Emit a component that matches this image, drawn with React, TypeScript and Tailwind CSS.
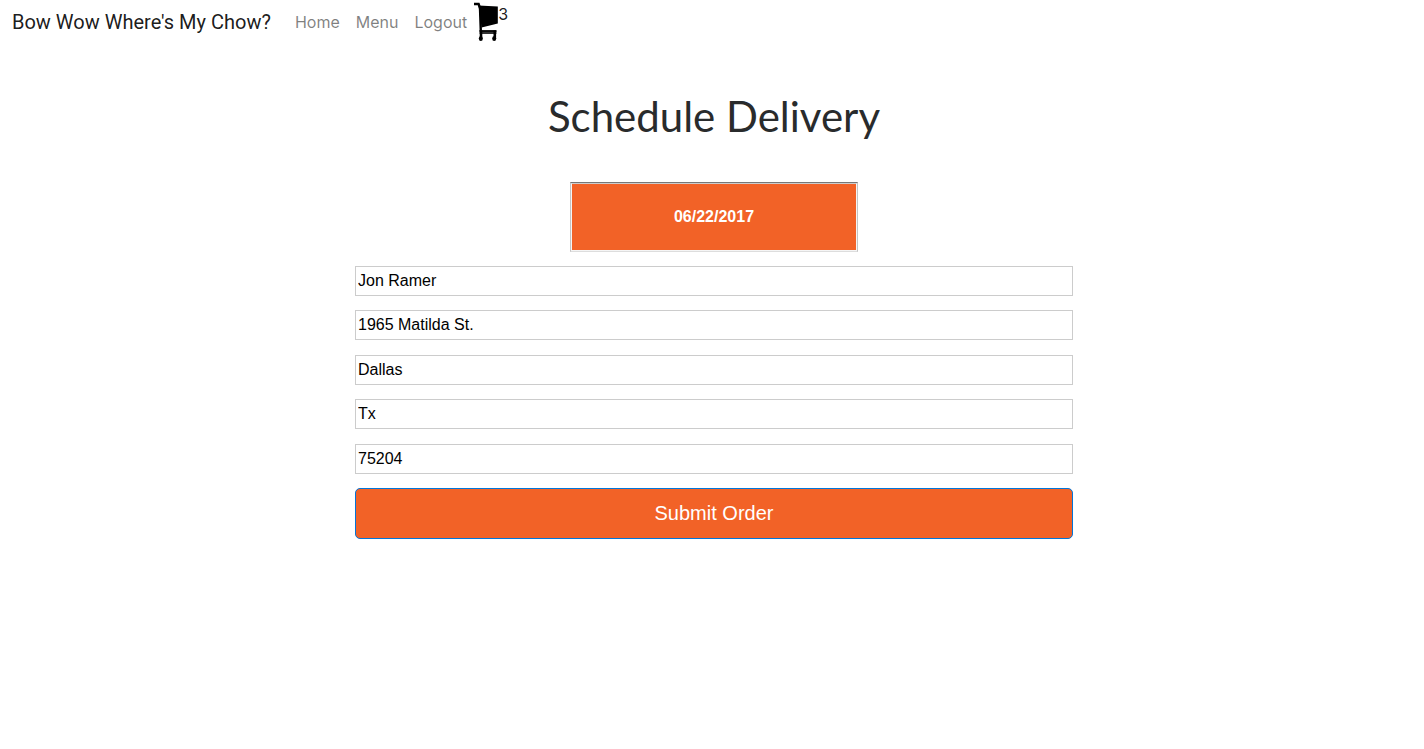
import { useState } from 'react';

const links = ['Home', 'Menu', 'Logout'];

const fields = [
  { name: 'name', label: 'Name', value: 'Jon Ramer' },
  { name: 'street', label: 'Street', value: '1965 Matilda St.' },
  { name: 'city', label: 'City', value: 'Dallas' },
  { name: 'state', label: 'State', value: 'Tx' },
  { name: 'zip', label: 'Zip code', value: '75204' },
];

function CartIcon() {
  return (
    <svg width="24" height="44" viewBox="0 0 24 44" aria-hidden="true">
      <path d="M0 4H4.6L6 8L6.8 31" fill="none" stroke="#000" strokeWidth="2.4" />
      <path d="M4.5 5.6L23.8 6.4V23.4L7.6 27.4L5.6 14Z" fill="#000" />
      <path d="M5.6 30.4H22.4V34H5.6Z" fill="#333" />
      <path d="M5.6 31H22.4" stroke="#000" strokeWidth="1.6" />
      <path d="M7 30.4V39M20.8 30.4V39" stroke="#000" strokeWidth="2.6" />
      <ellipse cx="6.8" cy="38.6" rx="2" ry="2.5" fill="#000" />
      <ellipse cx="20.2" cy="38.6" rx="2" ry="2.5" fill="#000" />
    </svg>
  );
}

function NavBar() {
  return (
    <nav className="flex items-center px-3 font-['Inter',sans-serif]">
      <a href="#" className="font-['Roboto',sans-serif] text-xl leading-11 text-black/90">
        Bow Wow Where's My Chow?
      </a>
      <div className="ml-6 flex gap-4 text-base text-black/50">
        {links.map((link) => (
          <a key={link} href="#">
            {link}
          </a>
        ))}
      </div>
      <a href="#" aria-label="Cart, 3 items" className="ml-[7px] flex text-base text-black/90">
        <CartIcon />
        <span className="pt-0.5">3</span>
      </a>
    </nav>
  );
}

export default function App() {
  const [date, setDate] = useState('06/22/2017');

  return (
    <div className="min-h-screen bg-white">
      <NavBar />
      <main className="flex flex-col items-center pt-12 pr-3 pl-4 font-['Liberation_Sans',Arial,sans-serif]">
        <h1 className="font-['Lato',sans-serif] text-[42px] leading-[48px] text-[#292b2c]">
          Schedule Delivery
        </h1>
        <form
          className="mt-[42px] flex w-full max-w-[718px] flex-col items-center gap-[14px]"
          onSubmit={(e) => e.preventDefault()}
        >
          <div className="w-2/5 border border-t-[#777777] border-r-[#c4c4c4] border-b-[#dddddd] border-l-[#c4c4c4]">
            <input
              aria-label="Delivery date"
              value={date}
              onChange={(e) => setDate(e.target.value)}
              className="block h-[68px] w-full border border-t-[#cccccc] border-r-[#f5f5f5] border-b-[#f5f5f5] border-l-[#f5f5f5] bg-[#f26227] text-center text-base font-bold text-white"
            />
          </div>
          <div className="flex min-h-[273px] w-full flex-col justify-between">
            {fields.map((field) => (
              <input
                key={field.name}
                name={field.name}
                aria-label={field.label}
                defaultValue={field.value}
                className="h-[30px] w-full border border-[#cccccc] px-0.5 text-base text-black"
              />
            ))}
            <button
              type="submit"
              className="h-[51px] w-full rounded-[5px] border border-[#0275d8] bg-[#f26227] text-xl text-white"
            >
              Submit Order
            </button>
          </div>
        </form>
      </main>
    </div>
  );
}
